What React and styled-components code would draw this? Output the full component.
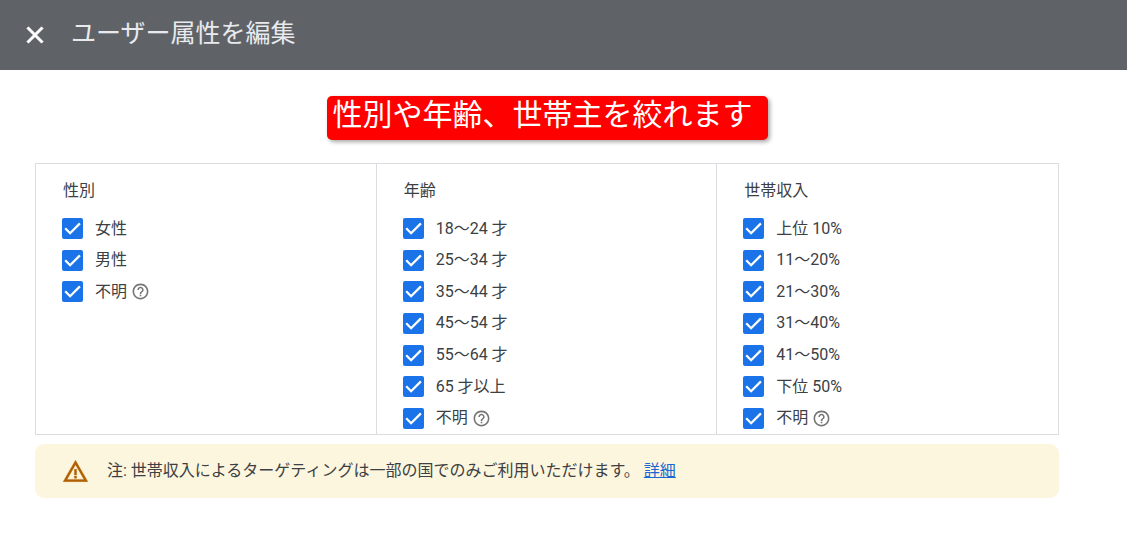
import React from 'react';
import styled, { createGlobalStyle } from 'styled-components';
import { MdClose, MdHelpOutline, MdWarningAmber } from 'react-icons/md';

const GlobalStyle = createGlobalStyle`
  * {
    box-sizing: border-box;
  }
  body {
    margin: 0;
    background: #fff;
    color: #3c4043;
    font-family: Roboto, 'Noto Sans CJK JP', sans-serif;
    font-size: 16px;
    line-height: 24px;
  }
`;

const Header = styled.header`
  display: flex;
  align-items: center;
  gap: 22px;
  height: 70px;
  padding: 0 21px;
  background: #5f6368;
`;

const CloseButton = styled.button`
  display: flex;
  padding: 0;
  border: 0;
  background: none;
  color: #fff;
  font-size: 28px;
  cursor: pointer;

  path:last-child {
    stroke: #fff;
    stroke-width: 0.6;
  }
  path:not(:last-child) {
    stroke: none;
  }
`;

const Title = styled.h1`
  margin: 0;
  padding-bottom: 2px;
  color: #e8eaed;
  font-size: 25px;
  font-weight: 400;
  line-height: 36px;
`;

const Main = styled.main`
  display: flex;
  flex-direction: column;
  padding: 26px 68px 26px 35px;
`;

const Callout = styled.p`
  align-self: center;
  margin: 0 0 23px;
  padding: 0 15px 6px 6px;
  border-radius: 5px;
  background: #f00;
  box-shadow: 2px 2px 4px rgba(0, 0, 0, 0.35);
  color: #fff;
  font-size: 30px;
  line-height: 38px;
`;

const Panel = styled.div`
  display: grid;
  grid-template-columns: repeat(3, 1fr);
  border: 1px solid #dadce0;
`;

const Group = styled.fieldset`
  min-width: 0;
  margin: 0;
  padding: 15px 24px 0 26px;
  border: 0;

  &:not(:last-child) {
    border-right: 1px solid #dadce0;
  }
`;

const Legend = styled.legend`
  float: left;
  width: 100%;
  margin-bottom: 10px;
  padding: 0 1px;
`;

// seven equal rows, shorter groups leave the last ones empty
const Options = styled.div`
  clear: both;
  display: grid;
  grid-template-rows: repeat(7, 1fr);
  height: 221px;
`;

const Option = styled.div`
  display: flex;
  align-items: center;

  label {
    display: flex;
    align-items: center;
    gap: 12px;
    cursor: pointer;
  }
`;

const Check = styled.span`
  display: grid;

  input,
  svg {
    grid-area: 1 / 1;
    width: 21px;
    height: 21px;
    margin: 0;
  }
  input {
    appearance: none;
    border: 2px solid #5f6368;
    border-radius: 2px;
    cursor: pointer;
  }
  input:checked {
    border-color: #1a73e8;
    background: #1a73e8;
  }
  svg {
    pointer-events: none;
    fill: none;
    stroke: #fff;
    stroke-width: 2.3;
  }
  input:not(:checked) + svg {
    visibility: hidden;
  }
`;

const HelpButton = styled.button`
  display: flex;
  margin-left: 4px;
  padding: 0;
  border: 0;
  background: none;
  color: #757575;
  font-size: 19px;
  cursor: pointer;
`;

const Notice = styled.div`
  display: flex;
  align-items: center;
  gap: 18px;
  min-height: 54px;
  margin-top: 9px;
  padding: 0 27px;
  border-radius: 9px;
  background: #fdf6de;

  svg {
    flex: none;
    color: #b06000;
    font-size: 27px;
  }
  path:not([fill='none']) {
    stroke: #b06000;
    stroke-width: 0.3;
  }
  p {
    margin: 0;
  }
  a {
    color: #1967d2;
  }
`;

const groups = [
  { name: '性別', options: ['女性', '男性', '不明'] },
  {
    name: '年齢',
    options: [
      '18〜24 才',
      '25〜34 才',
      '35〜44 才',
      '45〜54 才',
      '55〜64 才',
      '65 才以上',
      '不明',
    ],
  },
  {
    name: '世帯収入',
    options: [
      '上位 10%',
      '11〜20%',
      '21〜30%',
      '31〜40%',
      '41〜50%',
      '下位 50%',
      '不明',
    ],
  },
];

const CheckOption = ({ text }) => (
  <Option>
    <label>
      <Check>
        <input type="checkbox" defaultChecked />
        <svg viewBox="0 0 21 21" aria-hidden="true">
          <path d="M3.2 10.3 8.1 15.2 17.9 5.4" />
        </svg>
      </Check>
      {text}
    </label>
    {text === '不明' && (
      <HelpButton type="button" aria-label="ヘルプ">
        <MdHelpOutline />
      </HelpButton>
    )}
  </Option>
);

const App = () => (
  <>
    <GlobalStyle />
    <Header>
      <CloseButton type="button" aria-label="閉じる">
        <MdClose />
      </CloseButton>
      <Title>ユーザー属性を編集</Title>
    </Header>
    <Main>
      <Callout>性別や年齢、世帯主を絞れます</Callout>
      <Panel>
        {groups.map(({ name, options }) => (
          <Group key={name}>
            <Legend>{name}</Legend>
            <Options>
              {options.map(text => (
                <CheckOption key={text} text={text} />
              ))}
            </Options>
          </Group>
        ))}
      </Panel>
      <Notice>
        <MdWarningAmber />
        <p>
          注: 世帯収入によるターゲティングは一部の国でのみご利用いただけます。{' '}
          <a href="#details">詳細</a>
        </p>
      </Notice>
    </Main>
  </>
);

export default App;
